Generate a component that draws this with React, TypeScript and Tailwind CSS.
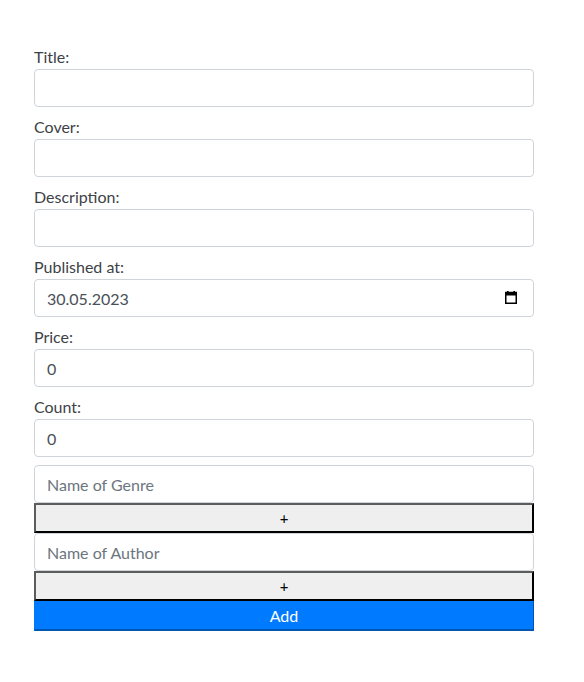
import { useState } from 'react'

const inputCls =
  'block w-full h-[38px] px-3 py-1.5 text-base leading-6 text-[#495057] bg-white border border-[#ced4da] rounded-[4px] outline-none placeholder:text-[#6c757d]'

const labelCls = 'block text-base leading-6 text-[#3d4246]'

const plusCls =
  'block w-full h-[30px] bg-[#efefef] text-[15px] leading-none text-black border-2 border-t-[#5c5c5c] border-l-[#5c5c5c] border-b-black border-r-black'

const CalendarIcon = () => (
  <svg width="12" height="13" viewBox="0 0 12 13" className="absolute right-[17px] top-[12px] pointer-events-none">
    <rect x="2" y="0" width="1.6" height="2.5" fill="#000" />
    <rect x="8.4" y="0" width="1.6" height="2.5" fill="#000" />
    <rect x="0" y="1.5" width="12" height="3" fill="#000" />
    <rect x="0.75" y="1.5" width="10.5" height="10.75" fill="none" stroke="#000" strokeWidth="1.5" />
  </svg>
)

export default function App() {
  const [title, setTitle] = useState('')
  const [cover, setCover] = useState('')
  const [description, setDescription] = useState('')
  const [published, setPublished] = useState('30.05.2023')
  const [price, setPrice] = useState('0')
  const [count, setCount] = useState('0')
  const [genre, setGenre] = useState('')
  const [author, setAuthor] = useState('')

  return (
    <div className="min-h-screen bg-white pt-[45px] font-['Lato',sans-serif]">
      <form className="ml-[34px] w-[500px]" onSubmit={(e) => e.preventDefault()}>
        <div className="mb-2">
          <label className={labelCls}>Title:</label>
          <input className={inputCls} value={title} onChange={(e) => setTitle(e.target.value)} />
        </div>
        <div className="mb-2">
          <label className={labelCls}>Cover:</label>
          <input className={inputCls} value={cover} onChange={(e) => setCover(e.target.value)} />
        </div>
        <div className="mb-2">
          <label className={labelCls}>Description:</label>
          <input className={inputCls} value={description} onChange={(e) => setDescription(e.target.value)} />
        </div>
        <div className="mb-2">
          <label className={labelCls}>Published at:</label>
          <div className="relative">
            <input className={inputCls} value={published} onChange={(e) => setPublished(e.target.value)} />
            <CalendarIcon />
          </div>
        </div>
        <div className="mb-2">
          <label className={labelCls}>Price:</label>
          <input className={inputCls} value={price} onChange={(e) => setPrice(e.target.value)} />
        </div>
        <div className="mb-2">
          <label className={labelCls}>Count:</label>
          <input className={inputCls} value={count} onChange={(e) => setCount(e.target.value)} />
        </div>
        <input
          className={inputCls}
          placeholder="Name of Genre"
          value={genre}
          onChange={(e) => setGenre(e.target.value)}
        />
        <button type="button" className={plusCls}>+</button>
        <input
          className={inputCls}
          placeholder="Name of Author"
          value={author}
          onChange={(e) => setAuthor(e.target.value)}
        />
        <button type="button" className={plusCls}>+</button>
        <button
          type="submit"
          className="block w-full h-[30px] bg-[#007bff] text-white text-base leading-6 border border-[#007bff] border-r-[#0056b3] border-b-2 border-b-[#0056b3]"
        >
          Add
        </button>
      </form>
    </div>
  )
}
